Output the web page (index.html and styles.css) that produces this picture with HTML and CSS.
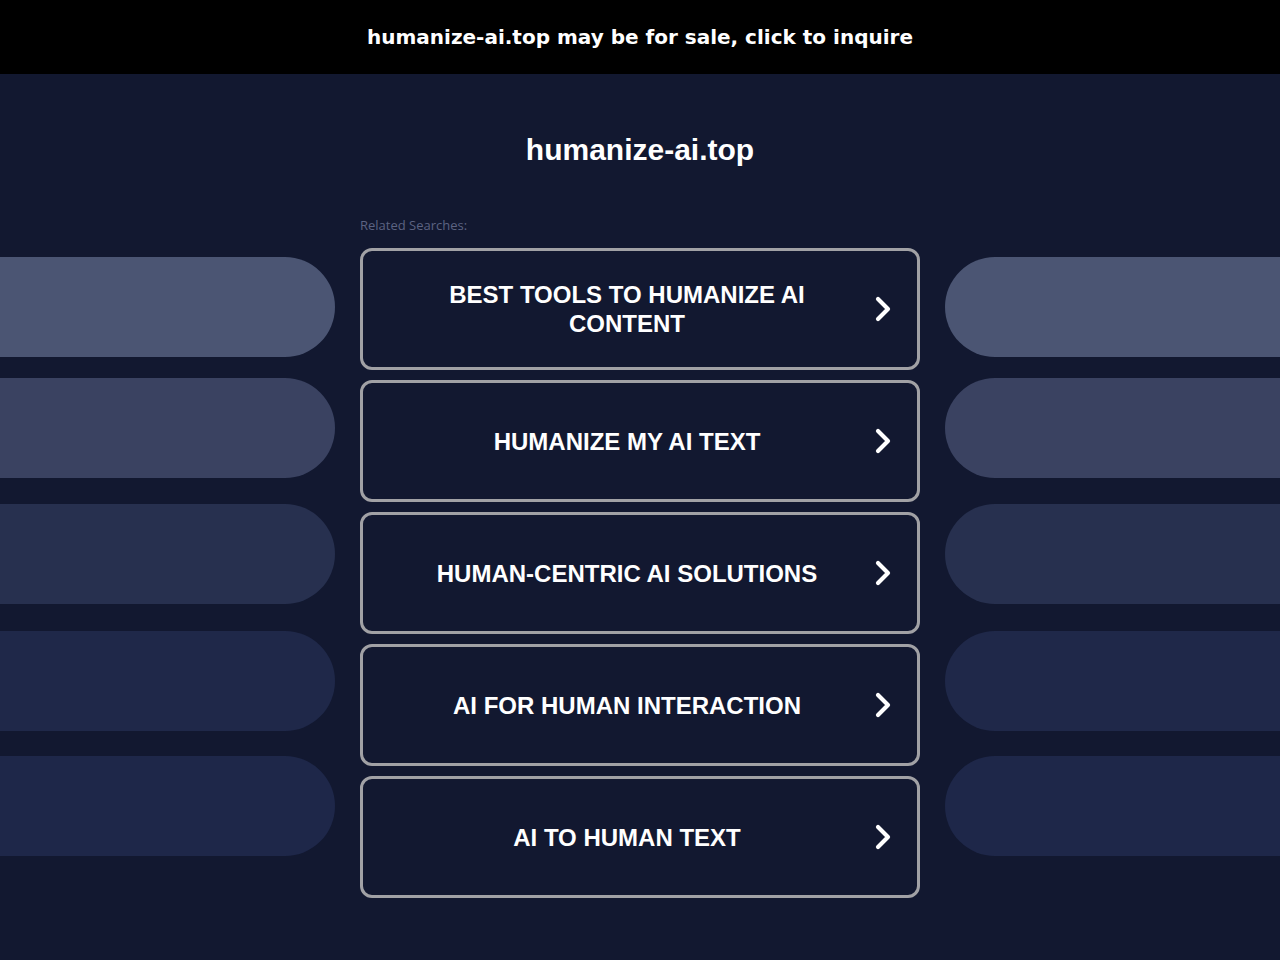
FILE: index.html
```html
<!DOCTYPE html>
<html lang="en">
<head>
<meta charset="utf-8">
<title>humanize-ai.top</title>
<link rel="stylesheet" href="styles.css">
</head>
<body>
<a class="sale-bar" href="#">humanize-ai.top may be for sale, click to inquire</a>
<header class="masthead">
  <h1 class="domain">humanize-ai.top</h1>
</header>
<main class="layout">
  <div class="side side-left">
    <div class="pill pill-1"></div>
    <div class="pill pill-2"></div>
    <div class="pill pill-3"></div>
    <div class="pill pill-4"></div>
    <div class="pill pill-5"></div>
  </div>
  <section class="searches">
    <p class="label">Related Searches:</p>
    <ul class="links">
      <li><a class="link" href="#"><span class="link-text">BEST TOOLS TO HUMANIZE AI CONTENT</span><svg class="chev" viewBox="0 0 18 26" width="18" height="26"><polyline points="4,3 14,13 4,23"/></svg></a></li>
      <li><a class="link" href="#"><span class="link-text">HUMANIZE MY AI TEXT</span><svg class="chev" viewBox="0 0 18 26" width="18" height="26"><polyline points="4,3 14,13 4,23"/></svg></a></li>
      <li><a class="link" href="#"><span class="link-text">HUMAN-CENTRIC AI SOLUTIONS</span><svg class="chev" viewBox="0 0 18 26" width="18" height="26"><polyline points="4,3 14,13 4,23"/></svg></a></li>
      <li><a class="link" href="#"><span class="link-text">AI FOR HUMAN INTERACTION</span><svg class="chev" viewBox="0 0 18 26" width="18" height="26"><polyline points="4,3 14,13 4,23"/></svg></a></li>
      <li><a class="link" href="#"><span class="link-text">AI TO HUMAN TEXT</span><svg class="chev" viewBox="0 0 18 26" width="18" height="26"><polyline points="4,3 14,13 4,23"/></svg></a></li>
    </ul>
  </section>
  <div class="side side-right">
    <div class="pill pill-1"></div>
    <div class="pill pill-2"></div>
    <div class="pill pill-3"></div>
    <div class="pill pill-4"></div>
    <div class="pill pill-5"></div>
  </div>
</main>
</body>
</html>
```
FILE: styles.css
```css
html, body {
  margin: 0;
  padding: 0;
}
body {
  background: #121830;
  font-family: "Liberation Sans", Arial, sans-serif;
  color: #fff;
  min-height: 960px;
}
.sale-bar {
  display: flex;
  align-items: center;
  justify-content: center;
  height: 74px;
  background: #000;
  color: #fff;
  text-decoration: none;
  font-family: "DejaVu Sans", sans-serif;
  font-weight: bold;
  font-size: 20px;
}
.masthead {
  padding: 58px 0 43px;
  text-align: center;
}
.domain {
  margin: 0;
  font-size: 30px;
  line-height: 35px;
  font-weight: bold;
  color: #fff;
}
.layout {
  display: grid;
  grid-template-columns: 1fr 560px 1fr;
  column-gap: 25px;
}
.side {
  display: flex;
  flex-direction: column;
  padding-top: 47px;
}
.pill {
  height: 100px;
}
.side-left .pill {
  border-radius: 0 50px 50px 0;
}
.side-right .pill {
  border-radius: 50px 0 0 50px;
}
.pill-1 { background: #4b5573; }
.pill-2 { background: #3a4261; margin-top: 21px; }
.pill-3 { background: #27304f; margin-top: 26px; }
.pill-4 { background: #1f2849; margin-top: 27px; }
.pill-5 { background: #1e2749; margin-top: 25px; }
.label {
  margin: 7px 0 15px;
  font-family: "Open Sans", "Noto Sans", sans-serif;
  font-size: 13px;
  line-height: 16px;
  color: #5c6382;
}
.links {
  list-style: none;
  margin: 0;
  padding: 0;
  display: flex;
  flex-direction: column;
  gap: 10px;
}
.link {
  box-sizing: border-box;
  height: 122px;
  display: flex;
  align-items: center;
  padding: 0 27px 0 57px;
  gap: 40px;
  border: 3px solid #a1a1a5;
  border-radius: 12px;
  color: #fff;
  text-decoration: none;
}
.link-text {
  flex: 1;
  text-align: center;
  font-size: 24px;
  line-height: 29px;
  font-weight: bold;
}
.chev {
  flex: none;
  margin-right: -2px;
}
.chev polyline {
  fill: none;
  stroke: #fff;
  stroke-width: 4.2;
  stroke-linecap: round;
  stroke-linejoin: round;
}
```
